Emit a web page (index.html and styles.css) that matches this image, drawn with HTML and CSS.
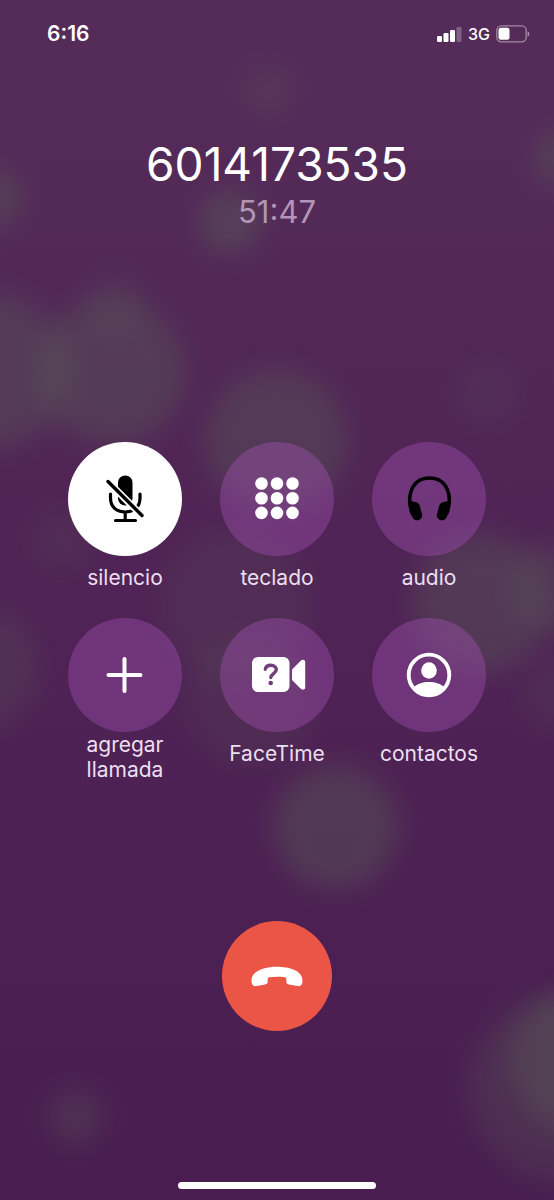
FILE: index.html
```html
<!DOCTYPE html>
<html lang="es">
<head>
<meta charset="utf-8">
<meta name="viewport" content="width=device-width, initial-scale=1">
<title>Llamada</title>
<link rel="stylesheet" href="styles.css">
</head>
<body>
<div class="screen">
  <svg class="backdrop" viewBox="0 0 554 1200" preserveAspectRatio="xMidYMid slice" aria-hidden="true">
    <defs>
      <filter id="soft" x="-80%" y="-80%" width="260%" height="260%" color-interpolation-filters="sRGB"><feGaussianBlur stdDeviation="14"/></filter>
    </defs>
    <g fill="#5c6459">
      <circle cx="268" cy="93" r="28" opacity=".2" filter="url(#soft)"/>
      <circle cx="230" cy="222" r="32" opacity=".4" filter="url(#soft)"/>
      <circle cx="-8" cy="198" r="32" opacity=".35" filter="url(#soft)"/>
      <circle cx="562" cy="158" r="30" opacity=".35" filter="url(#soft)"/>
      <circle cx="-8" cy="372" r="78" opacity=".33" filter="url(#soft)"/>
      <circle cx="112" cy="372" r="74" opacity=".34" filter="url(#soft)"/>
      <circle cx="115" cy="305" r="30" opacity=".18" filter="url(#soft)"/>
      <circle cx="276" cy="440" r="72" opacity=".33" filter="url(#soft)"/>
      <circle cx="487" cy="392" r="32" opacity=".14" filter="url(#soft)"/>
      <circle cx="62" cy="542" r="32" opacity=".14" filter="url(#soft)"/>
      <circle cx="235" cy="606" r="76" opacity=".16" filter="url(#soft)"/>
      <circle cx="250" cy="700" r="64" opacity=".16" filter="url(#soft)"/>
      <circle cx="482" cy="604" r="70" opacity=".34" filter="url(#soft)"/>
      <circle cx="556" cy="588" r="46" opacity=".26" filter="url(#soft)"/>
      <circle cx="-22" cy="668" r="62" opacity=".22" filter="url(#soft)"/>
      <circle cx="336" cy="828" r="63" opacity=".37" filter="url(#soft)"/>
      <circle cx="556" cy="694" r="36" opacity=".16" filter="url(#soft)"/>
      <circle cx="564" cy="1088" r="96" opacity=".24" filter="url(#soft)"/>
      <circle cx="584" cy="1062" r="74" opacity=".36" filter="url(#soft)"/>
      <circle cx="76" cy="1118" r="28" opacity=".28" filter="url(#soft)"/>
    </g>
  </svg>

  <header class="status">
    <time class="clock">6:16</time>
    <div class="indicators">
      <svg class="signal" viewBox="0 0 25 16" aria-label="Señal" role="img">
        <rect x="0" y="10" width="5" height="6" rx="1.3"/>
        <rect x="6.500" y="7" width="5" height="9" rx="1.3"/>
        <rect x="13" y="4" width="5" height="12" rx="1.3"/>
        <rect x="19.500" y="1" width="5" height="15" rx="1.3" opacity=".25"/>
      </svg>
      <span class="network">3G</span>
      <svg class="battery" viewBox="0 0 34 18" aria-label="Batería" role="img">
        <rect x=".8" y=".8" width="29.400" height="16" rx="4.500" fill="none" stroke="#fff" stroke-width="1.300" opacity=".45"/>
        <rect x="2.500" y="2.800" width="11" height="12" rx="2.300"/>
        <path d="M31.600 6.200c2.200.7 2.200 4.600 0 5.300z" opacity=".5"/>
      </svg>
    </div>
  </header>

  <main class="call">
    <h1 class="number">6014173535</h1>
    <p class="duration">51:47</p>

    <div class="controls">
      <button class="control" type="button" aria-pressed="true">
        <span class="disc disc-on">
          <svg class="icon" viewBox="0 0 60 60">
            <rect x="23" y="6.500" width="14.500" height="30" rx="7.200"/>
            <path d="M15.500 25v4c0 9 6 14 14.700 14S45 38 45 29v-4M30.200 43v8M20.500 51.500h20" fill="none" stroke="#000" stroke-width="3.200" stroke-linecap="round"/>
            <path d="M12 15.500 46 49.500" transform="translate(2 -1.800)" fill="none" stroke="#fff" stroke-width="7"/>
            <path d="M13 12.500 47 46.500" fill="none" stroke="#000" stroke-width="3.400" stroke-linecap="round"/>
          </svg>
        </span>
        <span class="label">silencio</span>
      </button>
      <button class="control" type="button">
        <span class="disc">
          <svg class="icon" viewBox="0 0 60 60">
            <circle cx="14.500" cy="14.500" r="6.300"/><circle cx="30" cy="14.500" r="6.300"/><circle cx="45.500" cy="14.500" r="6.300"/>
            <circle cx="14.500" cy="29.200" r="6.300"/><circle cx="30" cy="29.200" r="6.300"/><circle cx="45.500" cy="29.200" r="6.300"/>
            <circle cx="14.500" cy="43.900" r="6.300"/><circle cx="30" cy="43.900" r="6.300"/><circle cx="45.500" cy="43.900" r="6.300"/>
          </svg>
        </span>
        <span class="label">teclado</span>
      </button>
      <button class="control" type="button">
        <span class="disc disc-dark-icon">
          <svg class="icon" viewBox="0 0 60 60">
            <path d="M11.500 37C10 31 10.500 27 12 22.500 15 13.500 22 9 30.500 9S46 13.500 49 22.500c1.500 4.500 2 8.500.5 14.500" fill="none" stroke="#000" stroke-width="3.600"/>
            <rect x="12" y="33" width="10" height="18.500" rx="5" transform="rotate(-15 17 42)"/>
            <rect x="39" y="33" width="10" height="18.500" rx="5" transform="rotate(15 44 42)"/>
            <path d="M9.500 31c-.5 9 1.300 15 6 19l3-4-3-13zM51.500 31c.5 9-1.300 15-6 19l-3-4 3-13z"/>
          </svg>
        </span>
        <span class="label">audio</span>
      </button>
      <button class="control" type="button">
        <span class="disc">
          <svg class="icon" viewBox="0 0 60 60">
            <path d="M29.500 14v32M13.500 30h32" fill="none" stroke="#fff" stroke-width="4" stroke-linecap="round"/>
          </svg>
        </span>
        <span class="label">agregar llamada</span>
      </button>
      <button class="control" type="button">
        <span class="disc">
          <svg class="icon" viewBox="0 0 60 60">
            <rect x="5" y="12" width="37.500" height="35" rx="6"/>
            <path d="M45 24.500 53.500 16c2-2 4.700-1.200 4.700 1v25.500c0 2.200-2.700 3-4.700 1L45 35z"/>
            <path d="M18.300 24.300c.5-2.600 2.500-4 5.500-4 3.300 0 5.500 1.700 5.500 4.300 0 4-5.500 4-5.500 8" fill="none" stroke="#733d7c" stroke-width="3.400" stroke-linecap="round"/>
            <circle cx="23.700" cy="38" r="2.300" fill="#733d7c"/>
          </svg>
        </span>
        <span class="label">FaceTime</span>
      </button>
      <button class="control" type="button">
        <span class="disc">
          <svg class="icon" viewBox="0 0 60 60">
            <circle cx="30" cy="30" r="20.300" fill="none" stroke="#fff" stroke-width="3.800"/>
            <ellipse cx="30" cy="25.500" rx="7.800" ry="8.300"/>
            <path d="M15 42c3-3 8.500-5 15-5s12 2 15 5c-4 6-9 9-15 9s-11-3-15-9z"/>
          </svg>
        </span>
        <span class="label">contactos</span>
      </button>
    </div>

    <button class="hangup" type="button" aria-label="Colgar">
      <svg class="icon" viewBox="0 0 60 60">
        <path d="M30 20.800c12.500 0 25.500 4 25.500 13.700 0 4.300-1.500 6.200-5 5.600l-7.500-1.300c-2.700-.5-3.700-1.200-3.700-3.500v-2.500c0-1-.5-1.300-1.500-1.500-4.500-.8-11.100-.8-15.600 0-1 .2-1.500.5-1.500 1.500v2.500c0 2.300-1 3-3.700 3.500l-7.500 1.300c-3.500.6-5-1.300-5-5.600C4.500 24.800 17.500 20.800 30 20.800z"/>
      </svg>
    </button>
  </main>
  <div class="home-bar"></div>
</div>
</body>
</html>
```
FILE: styles.css
```css
* {
  box-sizing: border-box;
}

body {
  margin: 0;
  background: #4a1f50;
  color: #fff;
  font-family: Inter, "Liberation Sans", sans-serif;
}

.screen {
  position: relative;
  isolation: isolate;
  overflow: hidden;
  display: flex;
  flex-direction: column;
  align-items: center;
  min-height: 100vh;
  padding-bottom: 11px;
  background: linear-gradient(#552c59, #4f2355 50%, #491d50);
}

.backdrop {
  position: absolute;
  inset: 0;
  z-index: -1;
  width: 100%;
  height: 100%;
}

.status {
  display: flex;
  align-items: center;
  justify-content: space-between;
  width: 100%;
  height: 67px;
  padding: 0 24px 0 47px;
}

.clock {
  font-size: 21px;
  font-weight: 600;
}

.indicators {
  display: flex;
  align-items: center;
  gap: 6px;
}

.signal {
  width: 25px;
  height: 16px;
  fill: #fff;
}

.network {
  font-size: 16px;
  font-weight: 500;
}

.battery {
  width: 34px;
  height: 18px;
  fill: #fff;
}

.call {
  display: flex;
  flex-direction: column;
  align-items: center;
  padding-top: 69px;
}

.number {
  margin: 0;
  font-size: 46px;
  font-weight: 400;
  line-height: 56px;
}

.duration {
  margin: 0;
  color: #b395b8;
  font-size: 31px;
  font-weight: 400;
  line-height: 40px;
}

.controls {
  display: grid;
  grid-template-columns: repeat(3, 114px);
  gap: 20px 38px;
  margin-top: 210px;
}

.control {
  display: flex;
  flex-direction: column;
  align-items: center;
  padding: 0;
  border: 0;
  background: none;
  color: #ecdff0;
  font: inherit;
  cursor: pointer;
}

.disc {
  display: flex;
  align-items: center;
  justify-content: center;
  width: 114px;
  height: 114px;
  border-radius: 50%;
  background: rgba(175, 86, 192, 0.35);
  fill: #fff;
}

.disc-on {
  background: #fff;
  fill: #000;
}

.disc-dark-icon {
  fill: #000;
}

.icon {
  width: 60px;
  height: 60px;
}

.label {
  display: flex;
  align-items: center;
  justify-content: center;
  min-height: 42px;
  font-size: 21px;
  line-height: 25px;
  text-align: center;
}

.hangup {
  display: flex;
  align-items: center;
  justify-content: center;
  width: 110px;
  height: 110px;
  margin-top: 139px;
  padding: 0;
  border: 0;
  border-radius: 50%;
  background: #eb5545;
  fill: #fff;
  cursor: pointer;
}

.home-bar {
  width: 198px;
  height: 7px;
  margin-top: auto;
  border-radius: 4px;
  background: #fff;
}
```
